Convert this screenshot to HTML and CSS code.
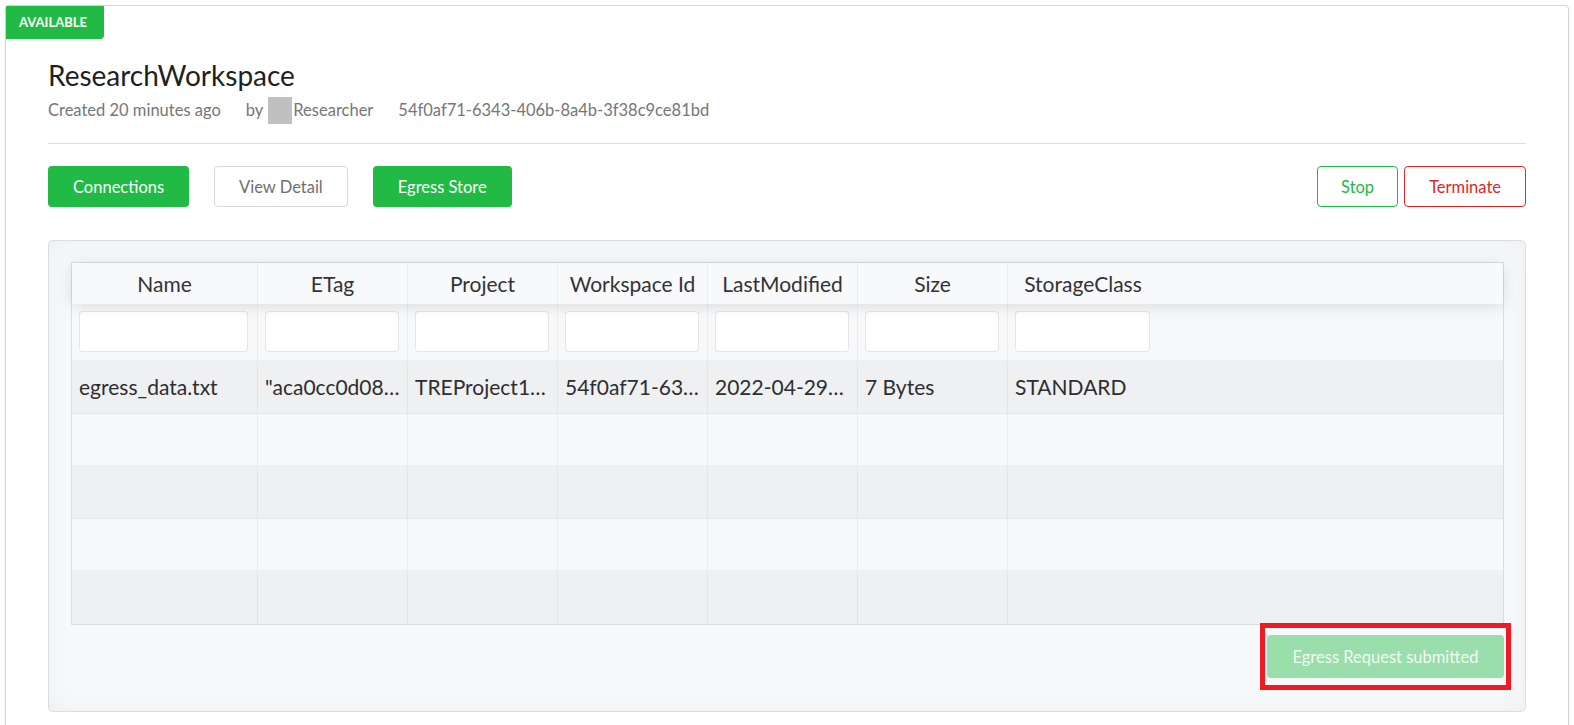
FILE: index.html
```html
<!DOCTYPE html>
<html lang="en">
<head>
<meta charset="utf-8">
<title>ResearchWorkspace</title>
<link rel="stylesheet" href="styles.css">
</head>
<body>
<div class="page">
  <div class="card">
    <div class="badge">AVAILABLE</div>
    <h1 class="title">ResearchWorkspace</h1>
    <div class="meta">
      <span class="meta-item">Created 20 minutes ago</span>
      <span class="meta-item">by<span class="avatar"></span>Researcher</span>
      <span class="meta-item">54f0af71-6343-406b-8a4b-3f38c9ce81bd</span>
    </div>
    <div class="divider"></div>
    <div class="actions">
      <div class="actions-left">
        <button class="btn btn-green">Connections</button>
        <button class="btn btn-plain">View Detail</button>
        <button class="btn btn-green">Egress Store</button>
      </div>
      <div class="actions-right">
        <button class="btn btn-basic-green">Stop</button>
        <button class="btn btn-basic-red">Terminate</button>
      </div>
    </div>
    <div class="panel">
      <div class="table">
        <div class="thead">
          <div class="th col-name">Name</div>
          <div class="th">ETag</div>
          <div class="th">Project</div>
          <div class="th">Workspace Id</div>
          <div class="th">LastModified</div>
          <div class="th">Size</div>
          <div class="th last">StorageClass</div>
          <div class="fill"></div>
        </div>
        <div class="filters">
          <div class="fc col-name"><input class="filter-input" type="text"></div>
          <div class="fc"><input class="filter-input" type="text"></div>
          <div class="fc"><input class="filter-input" type="text"></div>
          <div class="fc"><input class="filter-input" type="text"></div>
          <div class="fc"><input class="filter-input" type="text"></div>
          <div class="fc"><input class="filter-input" type="text"></div>
          <div class="fc last"><input class="filter-input" type="text"></div>
          <div class="fill"></div>
        </div>
        <div class="tr odd">
          <div class="td col-name">egress_data.txt</div>
          <div class="td">"aca0cc0d08b3b2f1c7a9d4e6b8f2c1a35"</div>
          <div class="td">TREProject1234</div>
          <div class="td">54f0af71-6343-406b-8a4b-3f38c9ce81bd</div>
          <div class="td">2022-04-29T10:22:31.000Z</div>
          <div class="td">7 Bytes</div>
          <div class="td last">STANDARD</div>
          <div class="fill"></div>
        </div>
        <div class="tr even">
          <div class="td col-name"></div><div class="td"></div><div class="td"></div><div class="td"></div><div class="td"></div><div class="td"></div><div class="td last"></div><div class="fill"></div>
        </div>
        <div class="tr odd">
          <div class="td col-name"></div><div class="td"></div><div class="td"></div><div class="td"></div><div class="td"></div><div class="td"></div><div class="td last"></div><div class="fill"></div>
        </div>
        <div class="tr even">
          <div class="td col-name"></div><div class="td"></div><div class="td"></div><div class="td"></div><div class="td"></div><div class="td"></div><div class="td last"></div><div class="fill"></div>
        </div>
        <div class="tr odd lastrow">
          <div class="td col-name"></div><div class="td"></div><div class="td"></div><div class="td"></div><div class="td"></div><div class="td"></div><div class="td last"></div><div class="fill"></div>
        </div>
      </div>
      <div class="panel-footer">
        <div class="highlight">
          <button class="btn btn-disabled">Egress Request submitted</button>
        </div>
      </div>
    </div>
  </div>
</div>
</body>
</html>
```

FILE: styles.css
```css
* { box-sizing: border-box; }

html, body {
  margin: 0;
  padding: 0;
  background: #ffffff;
  font-family: Lato, "Open Sans", "Liberation Sans", sans-serif;
  color: #222222;
}

.page {
  padding: 5px 5px 0 5px;
}

.card {
  position: relative;
  border: 1px solid #d4d4d5;
  border-radius: 4px;
  box-shadow: 0 1px 2px 0 rgba(34, 36, 38, 0.12);
  padding: 52px 42px 40px 42px;
  background: #fff;
}

.badge {
  position: absolute;
  top: 0;
  left: 0;
  width: 98px;
  height: 33px;
  background: #21ba45;
  color: #fff;
  font-weight: 700;
  font-size: 13px;
  line-height: 33px;
  padding-left: 13px;
  border-radius: 0 0 4px 0;
}

.title {
  margin: 0;
  font-size: 28px;
  font-weight: 400;
  line-height: 34px;
  color: #1f1f1f;
}

.meta {
  margin-top: 9px;
  height: 19px;
  font-size: 16.5px;
  line-height: 19px;
  color: #767676;
  display: flex;
  align-items: center;
}

.meta-item {
  margin-right: 25px;
  display: inline-flex;
  align-items: center;
}

.avatar {
  display: inline-block;
  width: 24px;
  height: 27px;
  background: #c0c0c0;
  margin: -4px 1px -4px 5px;
}

.divider {
  margin-top: 23px;
  border-top: 1px solid #dedede;
}

.actions {
  margin-top: 22px;
  display: flex;
  justify-content: space-between;
  align-items: center;
}

.actions-left {
  display: flex;
  gap: 25px;
}

.actions-right {
  display: flex;
  gap: 6px;
}

.btn {
  display: inline-flex;
  align-items: center;
  justify-content: center;
  height: 41px;
  padding: 0 25px;
  font-family: Lato, "Open Sans", "Liberation Sans", sans-serif;
  font-size: 16.5px;
  border-radius: 4px;
  border: none;
  background: none;
  cursor: pointer;
}

.btn-green {
  background: #21ba45;
  color: #fff;
}

.btn-plain {
  background: #fff;
  border: 1px solid #d8d8d8;
  color: #6f6f6f;
  padding: 0 24px;
}

.btn-basic-green {
  background: #fff;
  border: 1px solid #21ba45;
  color: #21ba45;
  padding: 0 23px;
}

.btn-basic-red {
  background: #fff;
  border: 1px solid #db2828;
  color: #db2828;
  padding: 0 24px;
}

.panel {
  margin-top: 33px;
  border: 1px solid #dcdddf;
  border-radius: 5px;
  background: #f7f8fa;
  box-shadow: inset 0 0 24px rgba(0, 0, 0, 0.045);
  padding: 21px 21px 21px 22px;
}

.table {
  border: 1px solid #dcdddf;
  font-size: 21px;
  color: #2e2e2e;
}

.thead, .filters, .tr {
  display: flex;
}

.thead {
  position: relative;
  z-index: 2;
  height: 41px;
  background: #f8f9fa;
  box-shadow: 0 2px 15px 0 rgba(0, 0, 0, 0.12);
  color: #333;
}

.th, .fc, .td {
  flex: 0 0 150px;
  width: 150px;
  border-right: 1px solid rgba(0, 0, 0, 0.045);
}

.col-name {
  flex-basis: 186px;
  width: 186px;
}

.fill {
  flex: 1 1 auto;
}

.th {
  display: flex;
  align-items: center;
  justify-content: center;
  padding: 0 4px;
  white-space: nowrap;
  overflow: hidden;
}

.filters {
  position: relative;
  z-index: 1;
  height: 57px;
  background: #f7f8fa;
  border-bottom: 1px solid rgba(0, 0, 0, 0.04);
}

.fc {
  padding: 7px 9px 8px 7px;
  display: flex;
  align-items: center;
}

.fc:not(.col-name) {
  padding: 7px 8px 8px 7px;
}

.filter-input {
  width: 100%;
  height: 41px;
  border: 1px solid rgba(0, 0, 0, 0.1);
  border-radius: 4px;
  background: #fff;
  outline: none;
}

.last {
  border-right: none;
}

.tr {
  height: 52px;
  border-bottom: 1px solid rgba(0, 0, 0, 0.035);
}

.tr.odd {
  height: 53px;
  background: #eff0f2;
}

.tr.even {
  background: #f7f8fa;
}

.tr.lastrow {
  border-bottom: none;
}

.td {
  display: flex;
  align-items: center;
  padding: 0 7px;
  overflow: hidden;
  white-space: nowrap;
}

.td:not(:empty) {
  display: block;
  line-height: 52px;
  text-overflow: ellipsis;
}

.panel-footer {
  display: flex;
  justify-content: flex-end;
  margin-top: 10px;
  padding-bottom: 12px;
}

.highlight {
  position: relative;
}

.highlight::after {
  content: "";
  position: absolute;
  top: -12px;
  bottom: -12px;
  left: -7px;
  right: -7px;
  border: 5px solid #ed1c24;
  pointer-events: none;
}

.btn-disabled {
  height: 43px;
  width: 237px;
  padding: 0;
  background: #9adeab;
  color: rgba(255, 255, 255, 0.9);
}
```
